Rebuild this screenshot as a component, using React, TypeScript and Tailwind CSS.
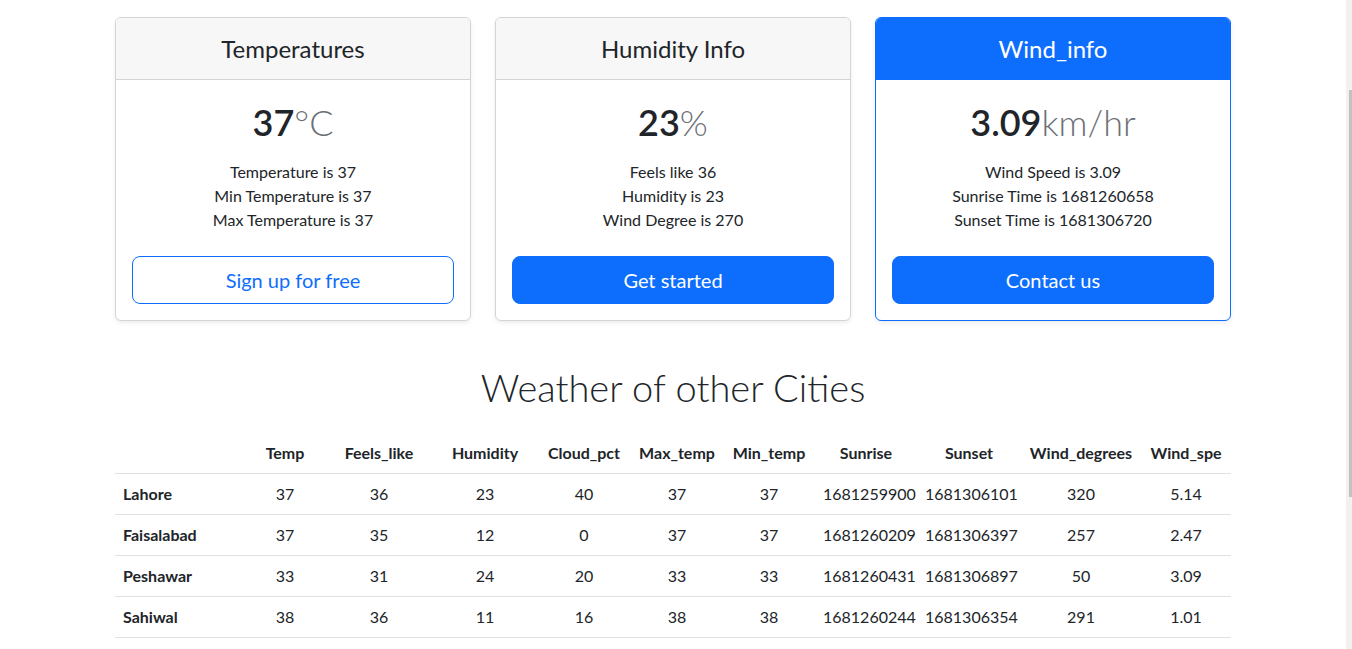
import React from 'react'

type CardInfo = {
  title: string
  value: string
  unit: string
  lines: string[]
  button: string
  featured?: boolean
  outline?: boolean
}

const cards: CardInfo[] = [
  {
    title: 'Temperatures',
    value: '37',
    unit: '°C',
    lines: ['Temperature is 37', 'Min Temperature is 37', 'Max Temperature is 37'],
    button: 'Sign up for free',
    outline: true,
  },
  {
    title: 'Humidity Info',
    value: '23',
    unit: '%',
    lines: ['Feels like 36', 'Humidity is 23', 'Wind Degree is 270'],
    button: 'Get started',
  },
  {
    title: 'Wind_info',
    value: '3.09',
    unit: 'km/hr',
    lines: ['Wind Speed is 3.09', 'Sunrise Time is 1681260658', 'Sunset Time is 1681306720'],
    button: 'Contact us',
    featured: true,
  },
]

const columns = [
  { label: '', width: 'w-[130px]' },
  { label: 'Temp', width: 'w-[80px]' },
  { label: 'Feels_like', width: 'w-[108px]' },
  { label: 'Humidity', width: 'w-[104px]' },
  { label: 'Cloud_pct', width: 'w-[94px]' },
  { label: 'Max_temp', width: 'w-[92px]' },
  { label: 'Min_temp', width: 'w-[92px]' },
  { label: 'Sunrise', width: 'w-[102px]' },
  { label: 'Sunset', width: 'w-[104px]' },
  { label: 'Wind_degrees', width: 'w-[120px]' },
  { label: 'Wind_spe', width: 'w-[90px]' },
]

const cities: (string | number)[][] = [
  ['Lahore', 37, 36, 23, 40, 37, 37, 1681259900, 1681306101, 320, '5.14'],
  ['Faisalabad', 37, 35, 12, 0, 37, 37, 1681260209, 1681306397, 257, '2.47'],
  ['Peshawar', 33, 31, 24, 20, 33, 33, 1681260431, 1681306897, 50, '3.09'],
  ['Sahiwal', 38, 36, 11, 16, 38, 38, 1681260244, 1681306354, 291, '1.01'],
]

function PricingCard({ card }: { card: CardInfo }) {
  return (
    <div
      className={`flex flex-col rounded-[6px] border bg-white shadow-[0_2px_4px_rgba(0,0,0,0.075)] ${
        card.featured ? 'border-[#0d6efd]' : 'border-[#d3d4d5]'
      }`}
    >
      <div
        className={`rounded-t-[5px] border-b py-4 text-center ${
          card.featured ? 'border-[#0d6efd] bg-[#0d6efd] text-white' : 'border-[#d3d4d5] bg-[#f7f7f7] text-[#212529]'
        }`}
      >
        <h4 className="text-[24px] leading-[29px] font-normal">{card.title}</h4>
      </div>
      <div className="p-4 text-center">
        <h1 className="pt-[5px] text-[36px] leading-[43px] font-semibold text-[#212529]">
          {card.value}
          <small className="text-[36px] font-light text-[#6c7075]">{card.unit}</small>
        </h1>
        <ul className="mt-4 mb-6 text-[16px] leading-[24px] text-[#212529]">
          {card.lines.map((line) => (
            <li key={line}>{line}</li>
          ))}
        </ul>
        <button
          type="button"
          className={`h-12 w-full rounded-[8px] border text-[20px] ${
            card.outline
              ? 'border-[#0d6efd] bg-white text-[#0d6efd]'
              : 'border-[#0d6efd] bg-[#0d6efd] text-white'
          }`}
        >
          {card.button}
        </button>
      </div>
    </div>
  )
}

export default function App() {
  return (
    <div className="flex h-[649px] overflow-hidden bg-white font-['Lato',sans-serif] text-[#212529]">
      <main className="flex-1 pt-[17px]">
        <div className="mx-auto w-[1116px]">
          <div className="grid grid-cols-3 gap-6">
            {cards.map((card) => (
              <PricingCard key={card.title} card={card} />
            ))}
          </div>

          <h2 className="mt-[42px] text-center text-[38px] leading-[48px] font-light text-[#212529]">
            Weather of other Cities
          </h2>

          <table className="mt-[22px] w-full table-fixed text-[16px] leading-[24px]">
            <thead>
              <tr>
                {columns.map((col, i) => (
                  <th
                    key={i}
                    className={`${col.width} border-b border-[#dee2e6] px-2 py-2 text-center font-bold`}
                  >
                    {col.label}
                  </th>
                ))}
              </tr>
            </thead>
            <tbody>
              {cities.map((row) => (
                <tr key={row[0]}>
                  {row.map((cell, i) =>
                    i === 0 ? (
                      <th key={i} className="border-b border-[#dee2e6] px-2 py-2 text-left font-bold">
                        {cell}
                      </th>
                    ) : (
                      <td key={i} className="border-b border-[#dee2e6] px-2 py-2 text-center">
                        {cell}
                      </td>
                    ),
                  )}
                </tr>
              ))}
            </tbody>
          </table>
        </div>
      </main>

      {/* scrollbar strip at the right edge */}
      <div className="flex w-[6px] flex-col bg-[#f1f1f1] pl-[3px]">
        <div className="h-[90px]" />
        <div className="h-[407px] bg-[#c1c1c1]" />
      </div>
    </div>
  )
}
